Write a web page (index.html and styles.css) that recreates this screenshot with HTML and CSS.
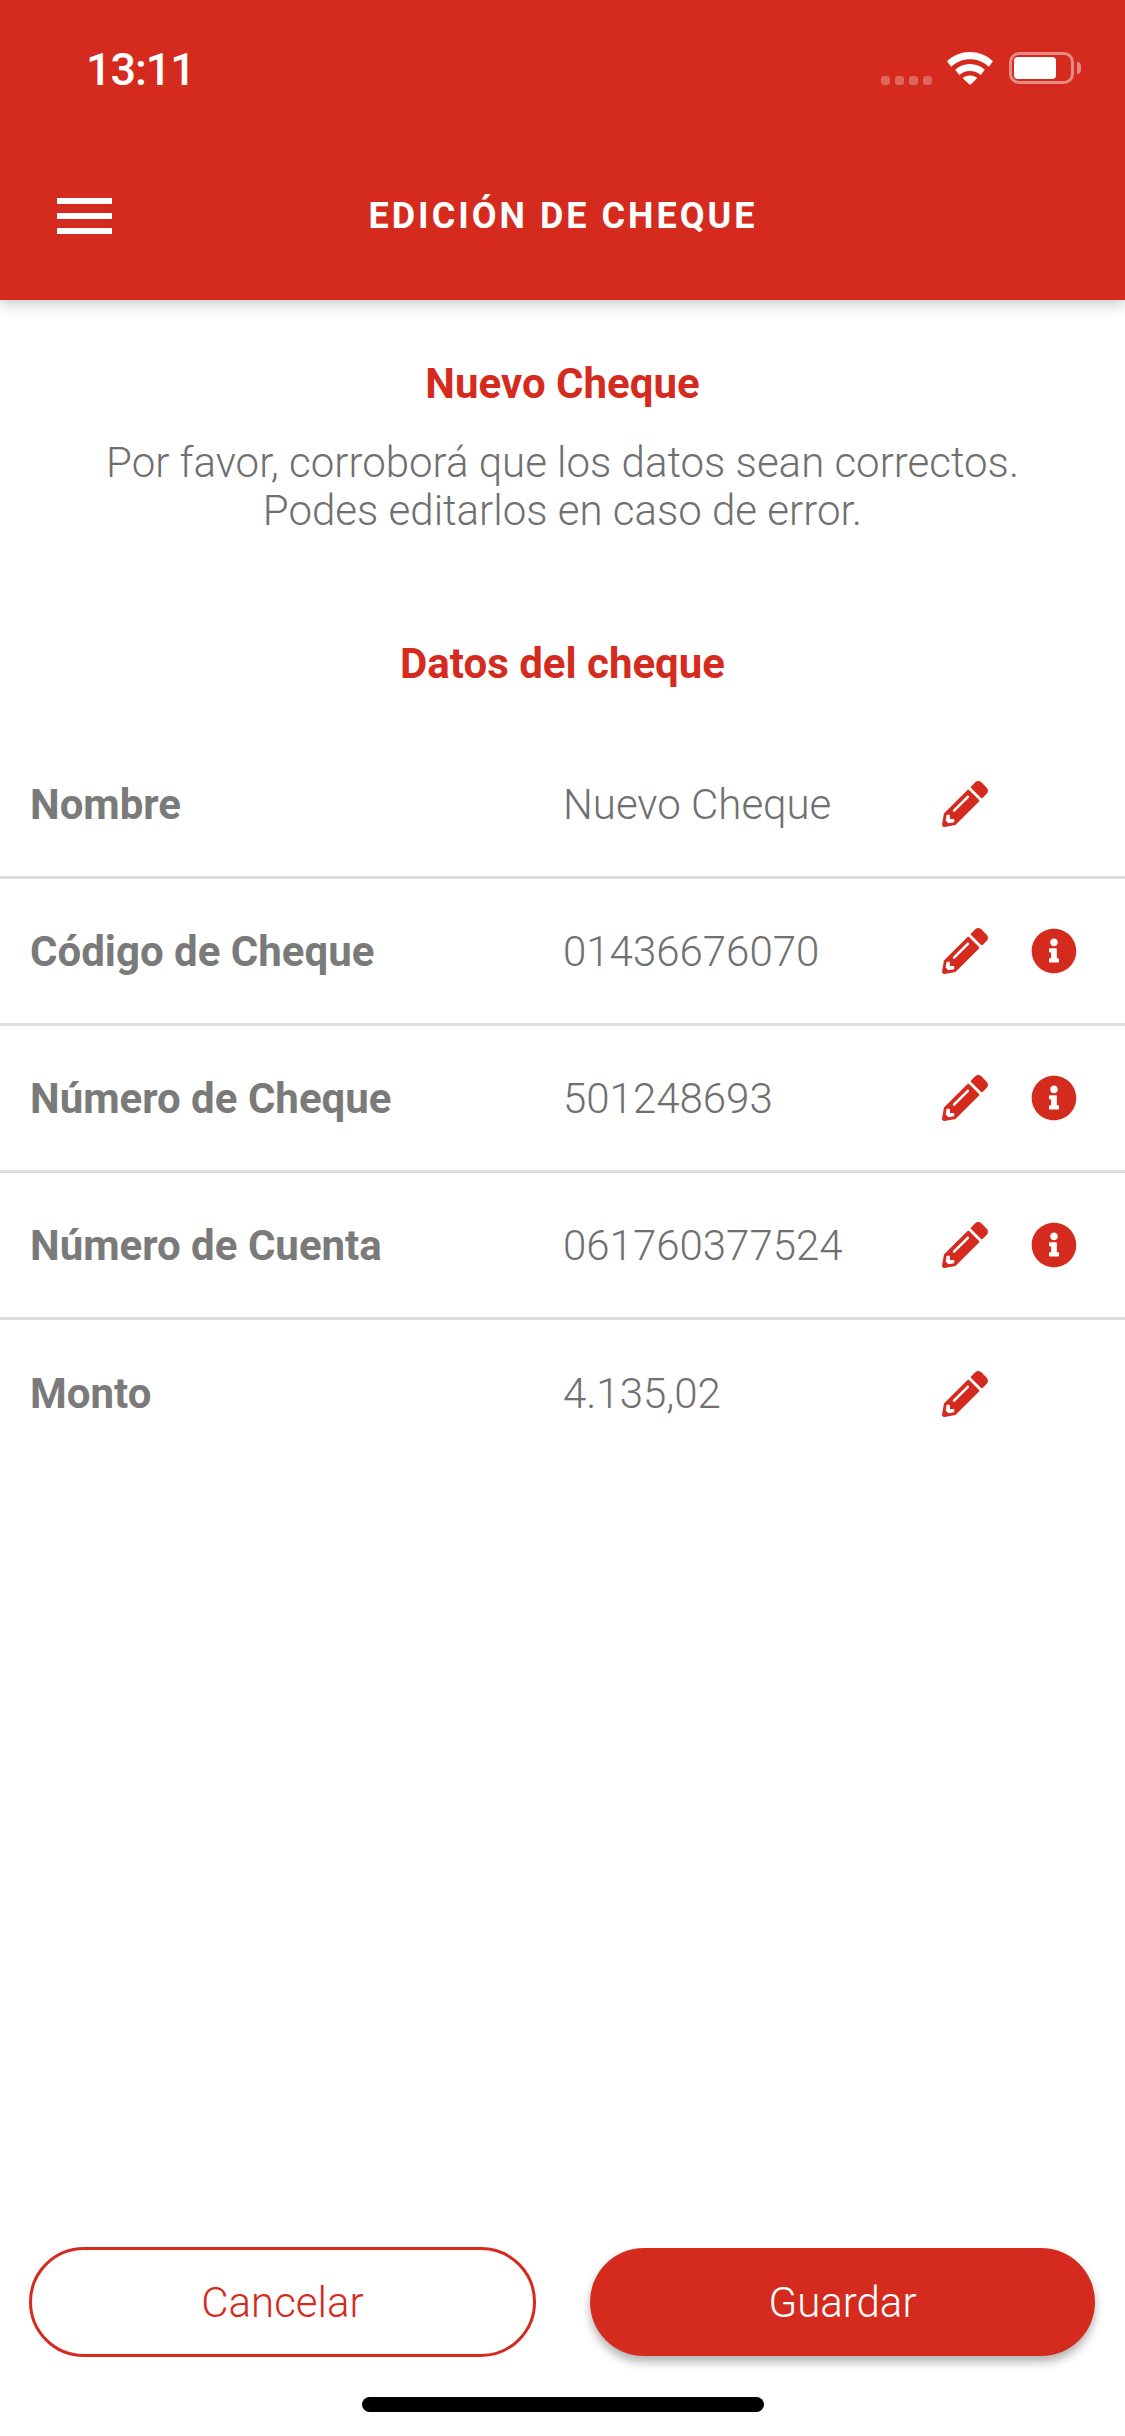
FILE: index.html
```html
<!DOCTYPE html>
<html lang="es">
<head>
<meta charset="utf-8">
<title>Edición de cheque</title>
<link rel="stylesheet" href="styles.css">
</head>
<body>
<div class="page">
  <header class="header">
    <div class="status">
      <span class="time">13:11</span>
      <div class="status-icons">
        <div class="dots"><i></i><i></i><i></i><i></i></div>
        <svg class="wifi" viewBox="0 0 46 33"><path d="M23 0C14 0 6.300 3.400 0 9.300l4.200 5.400C9.500 9.700 15.800 7.200 23 7.200s13.500 2.500 18.800 7.500l4.200-5.400C39.700 3.400 32 0 23 0z"/><path d="M23 12c-5.800 0-10.700 2.100-14.800 5.800l4.200 5.200c2.900-2.600 6.300-4 10.600-4s7.700 1.400 10.600 4l4.200-5.200C33.700 14.100 28.800 12 23 12z"/><path d="M23 23.500c-3 0-5.300 .9-7.400 2.600L23 33l7.400-6.900C28.300 24.400 26 23.500 23 23.500z"/></svg>
        <div class="battery"><div class="battery-fill"></div></div>
        <div class="battery-nub"></div>
      </div>
    </div>
    <div class="toolbar">
      <div class="menu"><i></i><i></i><i></i></div>
      <h1 class="title">EDICIÓN DE CHEQUE</h1>
    </div>
  </header>

  <main class="content">
    <h2 class="heading">Nuevo Cheque</h2>
    <p class="intro">Por favor, corroborá que los datos sean correctos.<br>Podes editarlos en caso de error.</p>
    <h2 class="heading heading-data">Datos del cheque</h2>
    <div class="list">
      <div class="row">
        <span class="label">Nombre</span><span class="value">Nuevo Cheque</span>
        <svg class="icon" viewBox="0 0 512 512"><use href="#pencil"/></svg>
      </div>
      <div class="row">
        <span class="label">Código de Cheque</span><span class="value">01436676070</span>
        <svg class="icon" viewBox="0 0 512 512"><use href="#pencil"/></svg>
        <svg class="icon info" viewBox="0 0 512 512"><use href="#info"/></svg>
      </div>
      <div class="row">
        <span class="label">Número de Cheque</span><span class="value">501248693</span>
        <svg class="icon" viewBox="0 0 512 512"><use href="#pencil"/></svg>
        <svg class="icon info" viewBox="0 0 512 512"><use href="#info"/></svg>
      </div>
      <div class="row">
        <span class="label">Número de Cuenta</span><span class="value">061760377524</span>
        <svg class="icon" viewBox="0 0 512 512"><use href="#pencil"/></svg>
        <svg class="icon info" viewBox="0 0 512 512"><use href="#info"/></svg>
      </div>
      <div class="row">
        <span class="label">Monto</span><span class="value">4.135,02</span>
        <svg class="icon" viewBox="0 0 512 512"><use href="#pencil"/></svg>
      </div>
    </div>
  </main>

  <footer class="footer">
    <div class="actions">
      <button class="btn btn-outline">Cancelar</button>
      <button class="btn btn-solid">Guardar</button>
    </div>
    <div class="home"></div>
  </footer>
</div>
<svg class="defs" width="0" height="0">
  <defs>
    <path id="pencil" d="M497.900 142.100l-46.100 46.100c-4.700 4.700-12.300 4.700-17 0l-111-111c-4.700-4.700-4.700-12.300 0-17l46.100-46.100c18.700-18.700 49.100-18.700 67.900 0l60.100 60.100c18.800 18.700 18.800 49.100 0 67.900zM284.200 99.800L21.600 362.400.4 483.900c-2.900 16.400 11.400 30.600 27.800 27.800l121.500-21.300 262.600-262.600c4.700-4.700 4.700-12.300 0-17l-111-111c-4.800-4.700-12.400-4.700-17.100 0zM124.100 339.900c-5.500-5.500-5.500-14.300 0-19.800l154-154c5.500-5.500 14.300-5.500 19.800 0s5.500 14.300 0 19.800l-154 154c-5.500 5.500-14.300 5.500-19.800 0zM88 424h48v36.300l-64.500 11.300-31.100-31.100L51.700 376H88v48z"/>
    <path id="info" d="M256 8C119.043 8 8 119.083 8 256c0 136.997 111.043 248 248 248s248-111.003 248-248C504 119.083 392.957 8 256 8zm0 110c23.196 0 42 18.804 42 42s-18.804 42-42 42-42-18.804-42-42 18.804-42 42-42zm56 254c0 6.627-5.373 12-12 12h-88c-6.627 0-12-5.373-12-12v-24c0-6.627 5.373-12 12-12h12v-64h-12c-6.627 0-12-5.373-12-12v-24c0-6.627 5.373-12 12-12h64c6.627 0 12 5.373 12 12v100h12c6.627 0 12 5.373 12 12v24z"/>
  </defs>
</svg>
</body>
</html>
```
FILE: styles.css
```css
* { box-sizing: border-box; }
html, body { margin: 0; padding: 0; background: #fff; }
body { font-family: Roboto, "Liberation Sans", sans-serif; }
.page { width: 1125px; height: 2436px; display: flex; flex-direction: column; overflow: hidden; }
.defs { display: block; height: 0; }

.header { height: 300px; background: #d52b1e; color: #fff; box-shadow: 0 4px 14px rgba(0,0,0,.22); flex: none; display: flex; flex-direction: column; position: relative; }
.status { height: 130px; display: flex; justify-content: space-between; padding: 52px 44px 0 86px; }
.time { font-size: 45px; line-height: 36px; font-weight: 500; letter-spacing: -1.1px; }
.status-icons { display: flex; align-items: flex-start; height: 33px; }
.dots { display: flex; gap: 5px; margin-top: 24px; margin-right: 15px; }
.dots i { width: 9px; height: 9px; border-radius: 3px; background: rgba(255,255,255,.28); }
.wifi { width: 46px; height: 33px; fill: #fff; margin-right: 16px; }
.battery { width: 65px; height: 32px; border: 3px solid rgba(255,255,255,.45); border-radius: 10px; padding: 2px; }
.battery-fill { width: 42px; height: 22px; background: #fff; border-radius: 4px; }
.battery-nub { width: 4px; height: 12px; margin: 10px 0 0 3px; background: rgba(255,255,255,.45); border-radius: 0 4px 4px 0; }

.toolbar { flex: 1; display: flex; align-items: flex-start; position: relative; padding: 68px 0 0 57px; }
.menu { width: 55px; display: flex; flex-direction: column; gap: 9px; }
.menu i { display: block; height: 6px; background: #fff; }
.title { position: absolute; left: 1px; right: 0; top: 65px; margin: 0; text-align: center; font-size: 36px; line-height: 42px; font-weight: 700; letter-spacing: 3px; }

.content { flex: 1; display: flex; flex-direction: column; }
.heading { margin: 0; text-align: center; color: #d52b1e; font-size: 42px; line-height: 50px; font-weight: 700; }
.content > .heading:first-child { margin-top: 59px; }
.intro { margin: 30px 0 0; text-align: center; color: #707070; font-size: 42px; line-height: 48px; font-weight: 300; }
.heading-data { margin-top: 104px; }
.list { margin-top: 43px; }
.row { height: 147px; display: flex; align-items: center; padding-left: 30px; border-bottom: 3px solid #dedede; }
.row:last-child { border-bottom: none; }
.label { width: 533px; flex: none; color: #7a7a7a; font-size: 42px; font-weight: 700; }
.value { width: 379px; flex: none; color: #707070; font-size: 42px; font-weight: 300; }
.icon { width: 46px; height: 46px; fill: #d52b1e; flex: none; }
.info { margin-left: 43px; }

.footer { flex: none; display: flex; flex-direction: column; align-items: center; }
.actions { width: 100%; display: flex; gap: 54px; padding: 0 30px 0 29px; align-items: center; }
.btn { font-family: inherit; font-size: 42px; font-weight: 300; border-radius: 55px; }
.btn-outline { width: 507px; height: 110px; background: #fff; color: #d52b1e; border: 3px solid #d52b1e; }
.btn-solid { width: 505px; height: 108px; background: #d52b1e; color: #fff; border: none; box-shadow: 0 6px 10px rgba(0,0,0,.3); }
.home { width: 402px; height: 15px; margin: 40px 0 24px; background: #000; border-radius: 8px; }
```
